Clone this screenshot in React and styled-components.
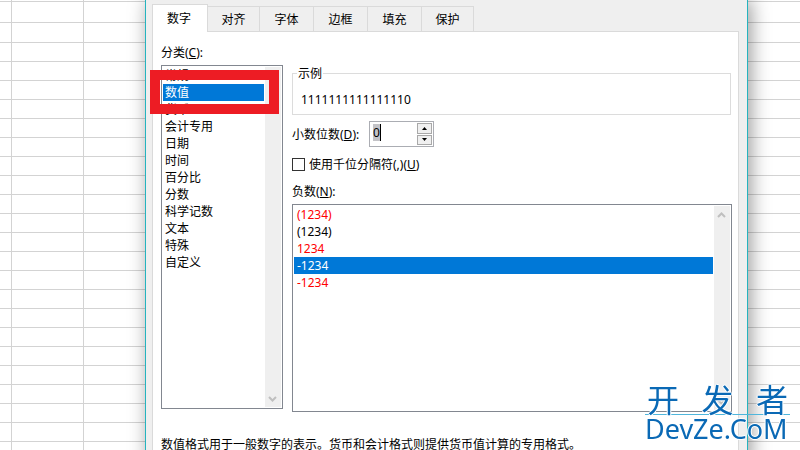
import React from "react"
import styled, { createGlobalStyle } from "styled-components"

const GlobalStyle = createGlobalStyle`
  * {
    box-sizing: border-box;
  }

  body {
    margin: 0;
    overflow: hidden;
    color: #000;
    font-family: "Noto Sans", "Noto Sans CJK SC", sans-serif;
    font-size: 12px;
    line-height: 16px;
  }

  button,
  input {
    color: inherit;
    font: inherit;
  }
`

// the first rows of the sheet are taller, so they get their own layer
const Sheet = styled.main`
  background-color: #fff;
  background-image: linear-gradient(90deg, #d3d3d3 1px, transparent 1px),
    linear-gradient(
      #fff 1px,
      #d3d3d3 1px 2px,
      #fff 2px 22px,
      #d3d3d3 22px 23px,
      #fff 23px
    ),
    linear-gradient(#d3d3d3 1px, transparent 1px);
  background-position: 11px 0, 0 0, 0 4px;
  background-repeat: repeat, no-repeat, repeat;
  background-size: 72px 100%, 100% 42px, 100% 19px;
  height: 100vh;
  overflow: hidden;
  padding: 0 52px 0 145px;
`

const Dialog = styled.section`
  background-color: #efefef;
  border: solid #25b4bf;
  border-width: 0 1px;
  box-shadow: 3px 0 18px rgba(0, 0, 0, 0.4);
  display: flex;
  flex-direction: column;
  min-height: 100vh;
  padding: 4px 8px 0 6px;
`

const TabBar = styled.div`
  align-items: flex-end;
  display: flex;
  height: 27px;
`

const Tab = styled.button`
  background-color: ${({ $active }) => ($active ? "#fff" : "#efefef")};
  border: solid #dadada;
  border-width: ${({ $active }) => ($active ? "1px 1px 0" : "1px 1px 0 0")};
  flex: none;
  height: ${({ $active }) => ($active ? "28px" : "25px")};
  margin-bottom: ${({ $active }) => ($active ? "-1px" : 0)};
  padding: ${({ $active }) => ($active ? "0 2px 0 0" : "2px 0 0")};
  position: relative;
  width: ${({ $width }) => $width}px;
`

const Panel = styled.div`
  background-color: #fff;
  border: 1px solid #dadada;
  flex: 1;
  padding: 13px 6px 12px 8px;
`

const Columns = styled.div`
  display: grid;
  gap: 9px;
  grid-template-columns: 122px minmax(0, 1fr);
`

const Column = styled.div`
  display: flex;
  flex-direction: column;
`

const Options = styled(Column)`
  padding-top: 19px;
`

const Caption = styled.div`
  margin-bottom: 4px;
`

const ListFrame = styled.div`
  border: 1px solid #828790;
  display: flex;
  height: ${({ $height }) => $height}px;
  padding: 1px;
`

const List = styled.ul`
  flex: 1;
  list-style: none;
  margin: 0;
  padding: 0;
`

const Item = styled.li`
  background-color: ${({ $selected }) => ($selected ? "#0078d7" : "#fff")};
  color: ${({ $selected, $red }) =>
    $selected ? "#fff" : $red ? "#f00" : "#000"};
  cursor: default;
  line-height: 17px;
  padding: 0 ${({ $inset }) => $inset || 2}px;
  position: relative;
`

const Marker = styled.span`
  border: 10px solid #ed1c24;
  inset: -14px -15px -13px -13px;
  position: absolute;
  z-index: 1;
`

const Track = styled.div`
  align-items: center;
  background-color: #efefef;
  display: flex;
  flex-direction: column;
  justify-content: space-between;
  margin-left: 1px;
  padding: 5px 1px 4px 0;
  width: 16px;
`

const Sample = styled.fieldset`
  border: 1px solid #dcdcdc;
  margin: 0 1px 6px 0;
  min-width: 0;
  padding: 10px 8px 6px;

  legend {
    margin-left: -4px;
    padding: 2px 1px 0;
  }

  output {
    display: block;
  }
`

const Field = styled.div`
  align-items: center;
  display: flex;
  gap: 8px;
  margin-bottom: 8px;

  label {
    min-width: 69px;
    padding-top: 2px;
  }
`

const Spinner = styled.div`
  border: 1px solid #abadb3;
  display: flex;
  height: 26px;
  padding: 1px;
  width: 65px;
`

const SpinInput = styled.input`
  background: linear-gradient(90deg, #c3c3c7 7px, #000 7px 8px, #fff 8px) 2px
    1px / 9px 17px no-repeat;
  border: 0;
  flex: 1;
  min-width: 0;
  outline: 0;
  padding: 0 2px 2px;
`

const SpinButtons = styled.div`
  display: grid;
  gap: 1px;
  grid-template-rows: 1fr 1fr;
  width: 15px;
`

const SpinButton = styled.button`
  align-items: center;
  background-color: #f0f0f0;
  border: 1px solid #a9a9a9;
  display: flex;
  justify-content: center;
  min-height: 0;
  padding: 0;
`

const CheckRow = styled.label`
  align-items: center;
  display: flex;
  gap: 4px;
  margin-bottom: 11px;

  span {
    padding-top: 2px;
  }
`

const Checkbox = styled.input`
  appearance: none;
  background-color: #fff;
  border: 1px solid #333;
  height: 13px;
  margin: 0;
  width: 13px;
`

const Hint = styled.p`
  margin: 25px 0 0;
`

const Watermark = styled.div`
  bottom: 7px;
  color: #0a69b5;
  font-size: 27px;
  line-height: 28px;
  position: fixed;
  right: 10px;
  text-shadow: 1px 0 #fff, -1px 0 #fff, 0 1px #fff, 0 -1px #fff;
  width: 145px;
`

const WatermarkTop = styled.div`
  border-bottom: 1px solid #4fb6dc;
  display: flex;
  font-family: "Noto Sans CJK SC", sans-serif;
  font-size: 32px;
  justify-content: space-between;
  line-height: 32px;
  padding: 0 2px;
`

const tabs = [
  { name: "数字", width: 56 },
  { name: "对齐", width: 52 },
  { name: "字体", width: 54 },
  { name: "边框", width: 54 },
  { name: "填充", width: 54 },
  { name: "保护", width: 52 },
]

const categories = [
  "常规",
  "数值",
  "货币",
  "会计专用",
  "日期",
  "时间",
  "百分比",
  "分数",
  "科学记数",
  "文本",
  "特殊",
  "自定义",
]

const negatives = [
  { text: "(1234)", red: true },
  { text: "(1234)", red: false },
  { text: "1234", red: true },
  { text: "-1234", red: false },
  { text: "-1234", red: true },
]

function Chevron({ down }) {
  return (
    <svg width="9" height="8" viewBox="0 0 9 8" aria-hidden="true">
      <path
        d={down ? "M1 2l3.5 3.5L8 2" : "M1 6l3.5-3.5L8 6"}
        fill="none"
        stroke="#bfbfbf"
        strokeWidth="2"
      />
    </svg>
  )
}

function Triangle({ down }) {
  return (
    <svg width="5" height="3" viewBox="0 0 5 3" aria-hidden="true">
      <path d={down ? "M0 0h5L2.5 3z" : "M0 3h5L2.5 0z"} />
    </svg>
  )
}

export default function App() {
  const [tab, setTab] = React.useState(0)
  const [category, setCategory] = React.useState(1)
  const [negative, setNegative] = React.useState(3)
  const [decimals, setDecimals] = React.useState(0)

  return (
    <>
      <GlobalStyle />
      <Sheet>
        <Dialog role="dialog">
          <TabBar role="tablist">
            {tabs.map((item, i) => (
              <Tab
                key={item.name}
                role="tab"
                aria-selected={i === tab}
                $active={i === tab}
                $width={item.width}
                onClick={() => setTab(i)}
              >
                {item.name}
              </Tab>
            ))}
          </TabBar>
          <Panel role="tabpanel">
            <Columns>
              <Column>
                <Caption id="category">
                  分类(<u>C</u>):
                </Caption>
                <ListFrame $height={344}>
                  <List role="listbox" aria-labelledby="category">
                    {categories.map((name, i) => (
                      <Item
                        key={name}
                        role="option"
                        aria-selected={i === category}
                        $selected={i === category}
                        onClick={() => setCategory(i)}
                      >
                        {name}
                        {i === 1 && <Marker />}
                      </Item>
                    ))}
                  </List>
                  <Track>
                    <Chevron />
                    <Chevron down />
                  </Track>
                </ListFrame>
              </Column>
              <Options>
                <Sample>
                  <legend>示例</legend>
                  <output>1111111111111110</output>
                </Sample>
                <Field>
                  <label htmlFor="decimals">
                    小数位数(<u>D</u>):
                  </label>
                  <Spinner>
                    <SpinInput
                      id="decimals"
                      type="text"
                      value={decimals}
                      onChange={(e) => setDecimals(Number(e.target.value) || 0)}
                    />
                    <SpinButtons>
                      <SpinButton onClick={() => setDecimals(decimals + 1)}>
                        <Triangle />
                      </SpinButton>
                      <SpinButton
                        onClick={() => setDecimals(Math.max(0, decimals - 1))}
                      >
                        <Triangle down />
                      </SpinButton>
                    </SpinButtons>
                  </Spinner>
                </Field>
                <CheckRow>
                  <Checkbox type="checkbox" />
                  <span>
                    使用千位分隔符(,)(<u>U</u>)
                  </span>
                </CheckRow>
                <Caption id="negative">
                  负数(<u>N</u>):
                </Caption>
                <ListFrame $height={208}>
                  <List role="listbox" aria-labelledby="negative">
                    {negatives.map((item, i) => (
                      <Item
                        key={i}
                        role="option"
                        aria-selected={i === negative}
                        $selected={i === negative}
                        $red={item.red}
                        $inset={3}
                        onClick={() => setNegative(i)}
                      >
                        {item.text}
                      </Item>
                    ))}
                  </List>
                  <Track>
                    <Chevron />
                    <Chevron down />
                  </Track>
                </ListFrame>
              </Options>
            </Columns>
            <Hint>
              数值格式用于一般数字的表示。货币和会计格式则提供货币值计算的专用格式。
            </Hint>
          </Panel>
        </Dialog>
        <Watermark>
          <WatermarkTop>
            <span>开</span>
            <span>发</span>
            <span>者</span>
          </WatermarkTop>
          DevZe.CoM
        </Watermark>
      </Sheet>
    </>
  )
}
